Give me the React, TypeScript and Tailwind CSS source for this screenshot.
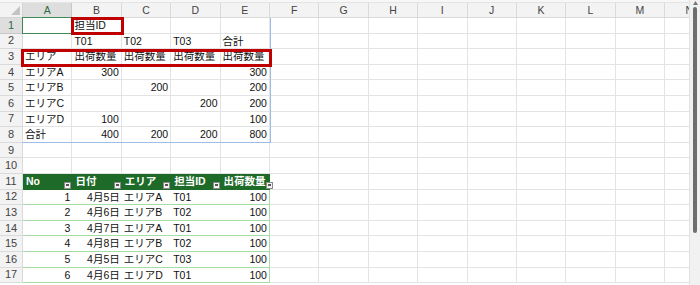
import React from 'react';

type Cell = { v?: string; r?: boolean };

const cols = ['A', 'B', 'C', 'D', 'E', 'F', 'G', 'H', 'I', 'J', 'K', 'L', 'M', 'N'];

// rows 1..17, columns A..E (rest empty)
const data: Cell[][] = [
  [{}, { v: '担当ID' }],
  [{}, { v: 'T01' }, { v: 'T02' }, { v: 'T03' }, { v: '合計' }],
  [{ v: 'エリア' }, { v: '出荷数量' }, { v: '出荷数量' }, { v: '出荷数量' }, { v: '出荷数量' }],
  [{ v: 'エリアA' }, { v: '300', r: true }, {}, {}, { v: '300', r: true }],
  [{ v: 'エリアB' }, {}, { v: '200', r: true }, {}, { v: '200', r: true }],
  [{ v: 'エリアC' }, {}, {}, { v: '200', r: true }, { v: '200', r: true }],
  [{ v: 'エリアD' }, { v: '100', r: true }, {}, {}, { v: '100', r: true }],
  [{ v: '合計' }, { v: '400', r: true }, { v: '200', r: true }, { v: '200', r: true }, { v: '800', r: true }],
  [],
  [],
  [{ v: 'No' }, { v: '日付' }, { v: 'エリア' }, { v: '担当ID' }, { v: '出荷数量' }],
  [{ v: '1', r: true }, { v: '4月5日', r: true }, { v: 'エリアA' }, { v: 'T01' }, { v: '100', r: true }],
  [{ v: '2', r: true }, { v: '4月6日', r: true }, { v: 'エリアB' }, { v: 'T02' }, { v: '100', r: true }],
  [{ v: '3', r: true }, { v: '4月7日', r: true }, { v: 'エリアA' }, { v: 'T01' }, { v: '100', r: true }],
  [{ v: '4', r: true }, { v: '4月8日', r: true }, { v: 'エリアB' }, { v: 'T02' }, { v: '100', r: true }],
  [{ v: '5', r: true }, { v: '4月5日', r: true }, { v: 'エリアC' }, { v: 'T03' }, { v: '100', r: true }],
  [{ v: '6', r: true }, { v: '4月6日', r: true }, { v: 'エリアD' }, { v: 'T01' }, { v: '100', r: true }],
];

const FilterBtn = () => (
  <span className="self-end mb-[1px] ml-auto w-[7px] h-[7px] shrink-0 bg-[#f2f2f2] border border-[#8a8a8a] flex items-center justify-center">
    <span className="w-[3px] h-[2px] bg-[#555]" />
  </span>
);

const App: React.FC = () => {
  return (
    <div
      className="relative w-[700px] h-[285px] overflow-hidden bg-white text-[10.5px] text-[#111]"
      style={{ fontFamily: '"Liberation Sans", "Noto Sans CJK JP", sans-serif' }}
    >
      {/* top strip */}
      <div className="h-[3px] bg-[#f7f7f7] border-b border-[#e4e4e4]" />

      <div className="grid grid-cols-[23px_repeat(14,49.4px)] grid-rows-[15px_repeat(17,15.6px)]">
        {/* corner */}
        <div className="flex items-end justify-end p-[2px] bg-[#f3f3f3] border-r border-b border-[#d4d4d4]">
          <svg width="9" height="9" viewBox="0 0 9 9">
            <path d="M9 0 L9 9 L0 9 Z" fill="#c4c4c4" />
          </svg>
        </div>
        {cols.map((c) => (
          <div
            key={c}
            className={
              c === 'A'
                ? 'flex items-center justify-center bg-[#dedede] text-[#2f6b45] border-r border-b border-[#c8c8c8] leading-none'
                : 'flex items-center justify-center bg-[#f3f3f3] text-[#444] border-r border-b border-[#dadada] leading-none'
            }
          >
            {c}
          </div>
        ))}

        {data.map((row, ri) => {
          const rn = ri + 1;
          const isHead = rn === 11;
          const isBody = rn >= 12;
          return (
            <React.Fragment key={rn}>
              <div
                className={
                  rn === 1
                    ? 'flex items-center justify-center text-[11px] bg-[#dedede] text-[#2f6b45] border-r border-b border-[#c8c8c8] leading-none'
                    : 'flex items-center justify-center text-[11px] bg-[#f3f3f3] text-[#444] border-r border-b border-[#dadada] leading-none'
                }
              >
                {rn}
              </div>
              {cols.map((c, ci) => {
                const cell = row[ci] || {};
                const inTable = ci < 5 && (isHead || isBody);
                let cls = 'flex items-center px-[2px] whitespace-nowrap leading-none border-r border-b border-[#e3e3e3]';
                if (rn === 1 && ci === 0) {
                  cls = 'flex items-center px-[2px] leading-none border border-[#3f8a5a] -mt-[1px] -ml-[1px]';
                } else if (inTable && isHead) {
                  cls = 'flex items-center pl-[3px] pr-[1px] whitespace-nowrap leading-none bg-[#1e6b29] text-white font-bold';
                } else if (inTable && isBody) {
                  cls =
                    ci === 4
                      ? 'flex items-center px-[2px] whitespace-nowrap leading-none bg-white border-b border-r border-[#a6dca6]'
                      : 'flex items-center px-[2px] whitespace-nowrap leading-none bg-white border-b border-[#a6dca6]';
                }
                return (
                  <div key={c} className={cell.r ? cls + ' justify-end' : cls}>
                    {cell.v}
                    {inTable && isHead && <FilterBtn />}
                  </div>
                );
              })}
            </React.Fragment>
          );
        })}
      </div>

      {/* range border A1:E8 */}
      <div className="absolute left-[22px] top-[18px] w-[249px] h-[125px] border-r border-b border-[#9cbde6] pointer-events-none" />

      {/* red highlight boxes */}
      <div className="absolute left-[71px] top-[17px] w-[53px] h-[18px] border-[3px] border-[#c00000]" />
      <div className="absolute left-[21px] top-[49px] w-[251px] h-[18px] border-[3px] border-[#c00000]" />

      {/* vertical scrollbar */}
      <div className="absolute right-0 top-0 w-[11px] h-full flex flex-col items-center gap-[2px] pt-[1px] bg-[#f1f1f1] border-l border-[#e2e2e2]">
        <svg width="5" height="4" viewBox="0 0 5 4">
          <path d="M0 4 L2.5 0 L5 4 Z" fill="#777" />
        </svg>
        <div className="w-[4px] h-[226px] rounded-full bg-[#6e6e6e]" />
      </div>
    </div>
  );
};

export default App;
